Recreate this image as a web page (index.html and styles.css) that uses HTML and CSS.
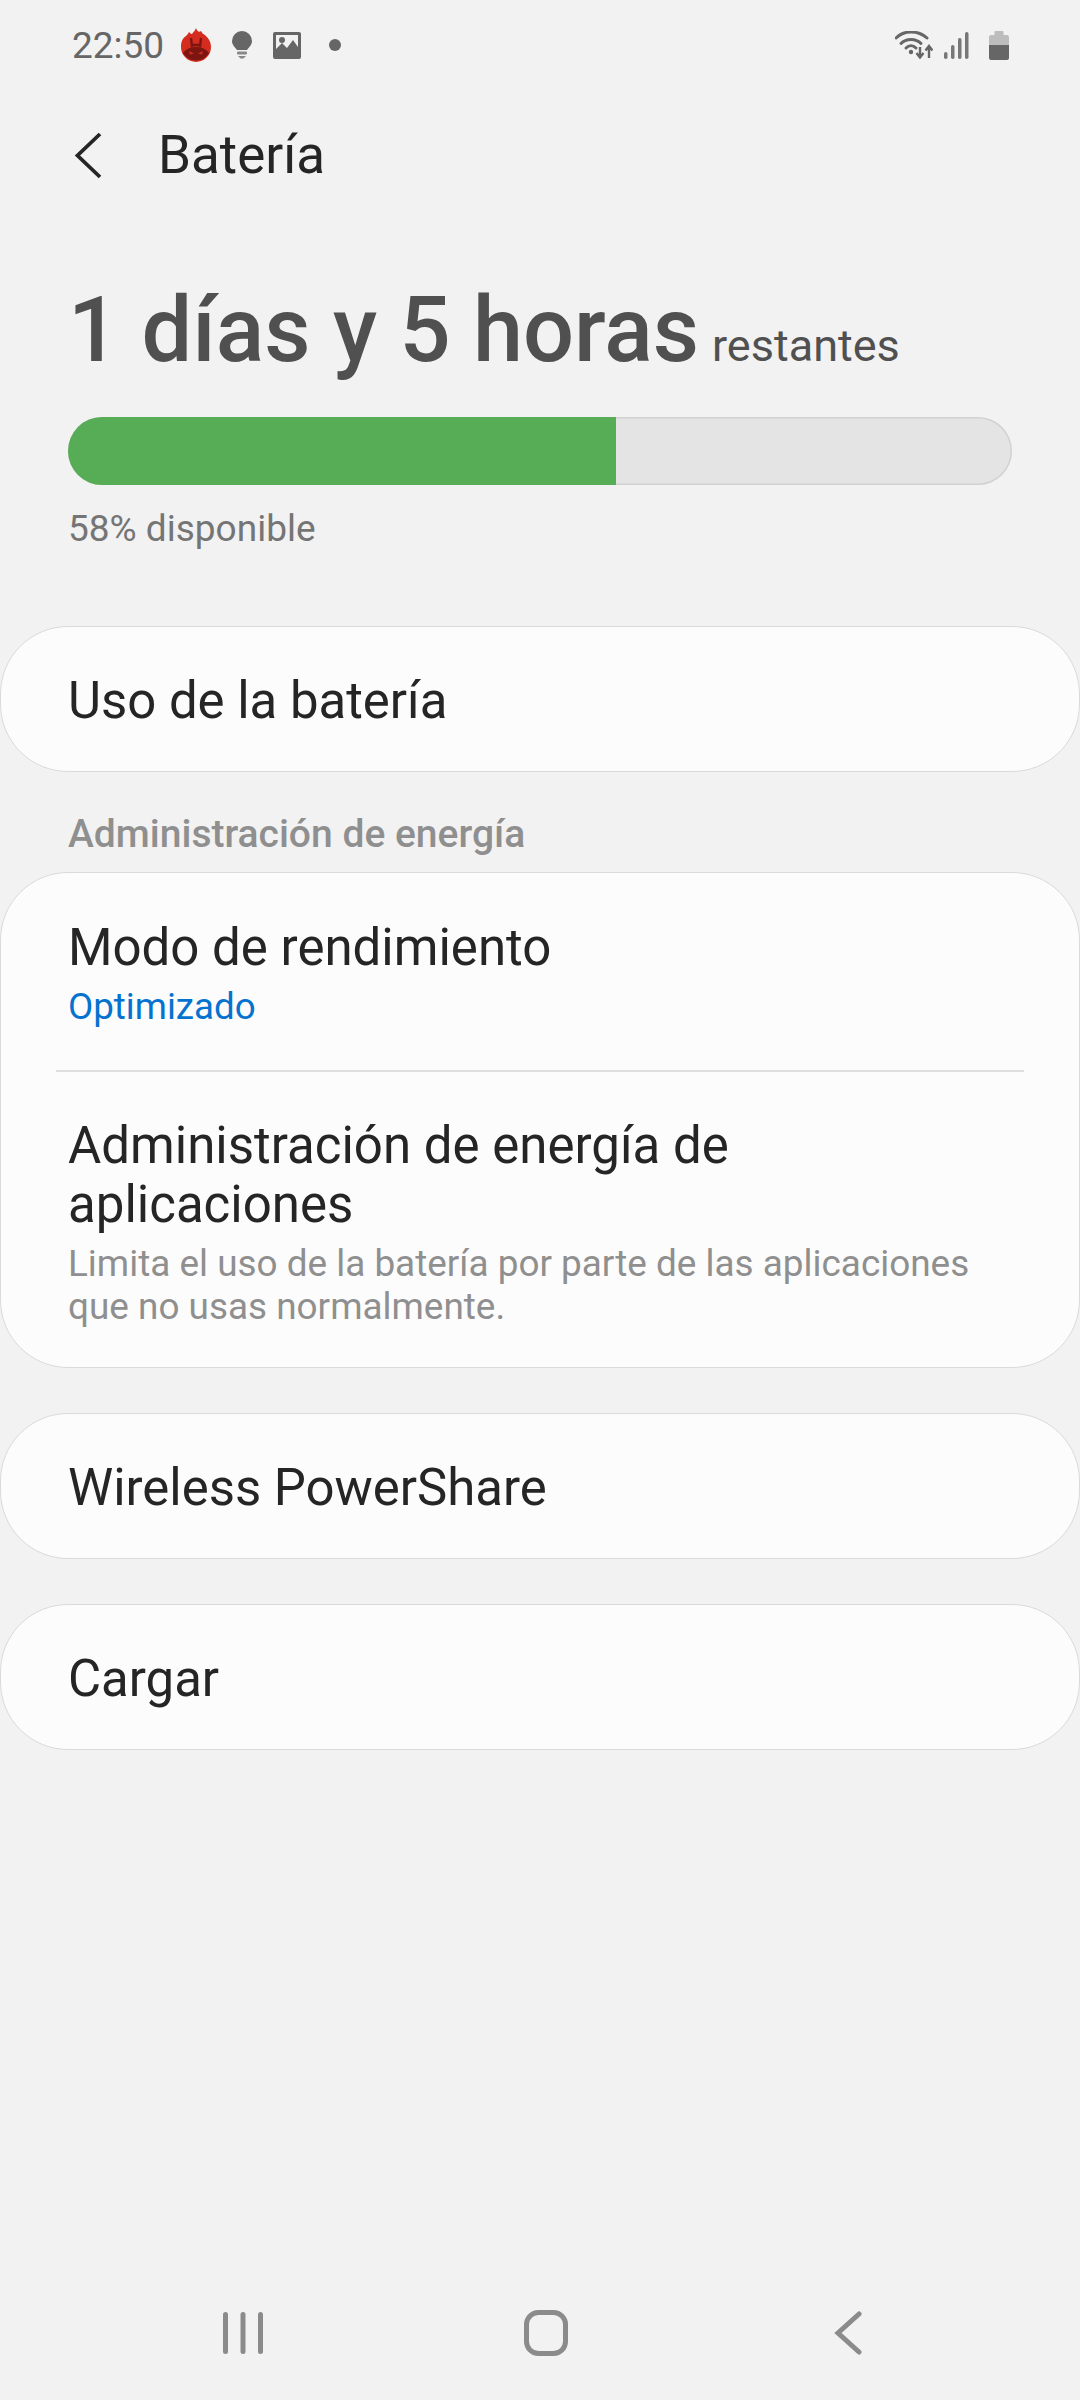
FILE: index.html
```html
<!DOCTYPE html>
<html lang="es">
<head>
    <meta charset="utf-8">
    <title>Batería</title>
    <link rel="stylesheet" href="styles.css">
</head>
<body>
    <div class="screen">
        <div class="statusbar">
            <div class="status-left">
                <span class="clock">22:50</span>
                <svg class="ic-antutu" width="30" height="34" viewBox="0 0 30 34">
                    <path d="M15 0 C16 3 18 5 20 3 C21 5 22 6 24 7 C27 10 30 13 30 19 A15 15 0 0 1 0 19 C0 13 2 10 5 8 C6 7 7 6 8 4 C9 5 10 6 11 6 C12 4 14 3 15 0Z" fill="#d42d20"/>
                    <path d="M2 25 C6 20 10 19 15 19 C20 19 24 20 28 25 A15 15 0 0 1 2 25Z" fill="#7d1610"/>
                    <path d="M10 10 L11 19 M20 10 L19 19 M11 17 L19 17" stroke="#7d1610" stroke-width="2.400" fill="none"/>
                    <path d="M8 23 L13 25.500 L9 26.500Z M22 23 L17 25.500 L21 26.500Z" fill="#d42d20"/>
                </svg>
                <svg class="ic-bulb" width="20" height="28" viewBox="0 0 20 28">
                    <path d="M10 0 A10 10 0 0 1 20 10 C20 14 17 16 15 19 L5 19 C3 16 0 14 0 10 A10 10 0 0 1 10 0Z" fill="#666"/>
                    <rect x="5" y="20.500" width="10" height="3" rx="1" fill="#888"/>
                    <path d="M6 25 L14 25 L11.500 27.500 L8.500 27.500Z" fill="#888"/>
                </svg>
                <svg class="ic-pic" width="28" height="27" viewBox="0 0 28 27">
                    <path fill-rule="evenodd" d="M2 0 H26 A2 2 0 0 1 28 2 V25 A2 2 0 0 1 26 27 H2 A2 2 0 0 1 0 25 V2 A2 2 0 0 1 2 0Z M3 3 V17 L9 11 L14 16 L20 8 L25 15 V3Z" fill="#666"/>
                    <circle cx="9" cy="8" r="3" fill="#666"/>
                </svg>
                <span class="dot"></span>
            </div>
            <div class="status-right">
                <svg class="ic-wifi" width="38" height="28" viewBox="0 0 38 28">
                    <path d="M1 7 C9 -1 23 -1 32 7" fill="none" stroke="#666" stroke-width="3" stroke-linecap="round"/>
                    <path d="M6 12.500 C11 7 21 7 26 12.500" fill="none" stroke="#666" stroke-width="3" stroke-linecap="round"/>
                    <path d="M11 17 C14 14 18 14 21 17" fill="none" stroke="#666" stroke-width="3" stroke-linecap="round"/>
                    <circle cx="16" cy="21" r="2.200" fill="#666"/>
                    <path d="M25 16 V25 M21.500 22 L25 26.500 L28.500 22" fill="none" stroke="#666" stroke-width="2.400"/>
                    <path d="M34 27 V16 M30.500 19.500 L34 15 L37.500 19.500" fill="none" stroke="#666" stroke-width="2.400"/>
                </svg>
                <svg class="ic-signal" width="25" height="27" viewBox="0 0 25 27">
                    <rect x="0" y="20" width="3.500" height="7" rx="1.700" fill="#777"/>
                    <rect x="7" y="13" width="3.500" height="14" rx="1.700" fill="#777"/>
                    <rect x="14" y="6" width="3.500" height="21" rx="1.700" fill="#777"/>
                    <rect x="21" y="0" width="3.500" height="27" rx="1.700" fill="#777"/>
                </svg>
                <svg class="ic-batt" width="20" height="29" viewBox="0 0 20 29">
                    <rect x="5.500" y="0" width="9" height="5" rx="1" fill="#bdbdbd"/>
                    <path d="M2 4 H18 A2 2 0 0 1 20 6 V14 H0 V6 A2 2 0 0 1 2 4Z" fill="#bdbdbd"/>
                    <path d="M0 14 H20 V27 A2 2 0 0 1 18 29 H2 A2 2 0 0 1 0 27Z" fill="#666"/>
                </svg>
            </div>
        </div>

        <div class="topbar">
            <svg class="ic-back" width="28" height="47" viewBox="0 0 28 47">
                <path d="M26 2 L3.500 23.500 L26 45" fill="none" stroke="#252525" stroke-width="3.800"/>
            </svg>
            <span class="topbar-title">Batería</span>
        </div>

        <div class="summary">
            <div class="remain"><span class="remain-big">1 días y 5 horas</span> <span class="remain-small">restantes</span></div>
            <div class="bar"><div class="bar-fill" style="width: 58%"></div></div>
            <div class="avail">58% disponible</div>
        </div>

        <div class="card row-single">Uso de la batería</div>

        <div class="section-label">Administración de energía</div>

        <div class="card card-group">
            <div class="item item-first">
                <div class="item-title">Modo de rendimiento</div>
                <div class="item-value">Optimizado</div>
            </div>
            <div class="divider"></div>
            <div class="item item-last">
                <div class="item-title">Administración de energía de aplicaciones</div>
                <div class="item-desc">Limita el uso de la batería por parte de las aplicaciones que no usas normalmente.</div>
            </div>
        </div>

        <div class="card row-single gap-top">Wireless PowerShare</div>
        <div class="card row-single gap-top">Cargar</div>

        <div class="navbar">
            <svg class="nav-recent" width="44" height="44" viewBox="0 0 44 44">
                <rect x="1" y="1" width="5" height="42" rx="2.500" fill="#8b8b8b"/>
                <rect x="18.500" y="1" width="5" height="42" rx="2.500" fill="#8b8b8b"/>
                <rect x="36" y="1" width="5" height="42" rx="2.500" fill="#8b8b8b"/>
            </svg>
            <svg class="nav-home" width="44" height="46" viewBox="0 0 44 46">
                <rect x="2.500" y="2.500" width="39" height="41" rx="12" fill="none" stroke="#8b8b8b" stroke-width="5"/>
            </svg>
            <svg class="nav-back" width="28" height="44" viewBox="0 0 28 44">
                <path d="M25 3 L4 22 L25 41" fill="none" stroke="#8b8b8b" stroke-width="5" stroke-linecap="round"/>
            </svg>
        </div>
    </div>
</body>
</html>
```

FILE: styles.css
```css
html, body {
    margin: 0;
    padding: 0;
}
body {
    background: #f2f2f2;
    font-family: Roboto, "Liberation Sans", sans-serif;
}
.screen {
    width: 1080px;
    height: 2400px;
    display: flex;
    flex-direction: column;
    box-sizing: border-box;
}

/* status bar */
.statusbar {
    height: 90px;
    display: flex;
    justify-content: space-between;
    align-items: center;
    padding: 0 71px 0 72px;
}
.status-left, .status-right {
    display: flex;
    align-items: center;
}
.clock {
    font-size: 37px;
    color: #666;
    margin-right: 17px;
}
.ic-antutu { margin-right: 21px; }
.ic-bulb { margin-right: 21px; }
.ic-pic { margin-right: 28px; }
.dot {
    width: 12px;
    height: 12px;
    border-radius: 50%;
    background: #666;
}
.ic-wifi { margin-right: 11px; }
.ic-signal { margin-right: 20px; }

/* title */
.topbar {
    height: 130px;
    display: flex;
    align-items: center;
    padding-left: 74px;
}
.topbar-title {
    font-size: 53px;
    color: #252525;
    margin-left: 56px;
}

.summary {
    padding: 0 68px;
}
.remain {
    margin-top: 65px;
    height: 92px;
    line-height: 92px;
    white-space: nowrap;
    color: #505050;
}
.remain-big {
    font-size: 90px;
    font-weight: 500;
}
.remain-small {
    font-size: 45px;
    margin-left: 9px;
}
.bar {
    margin-top: 40px;
    height: 68px;
    border-radius: 34px;
    background: #e4e4e4;
    box-shadow: inset 0 0 0 1.500px #d2d2d2;
    overflow: hidden;
}
.bar-fill {
    height: 68px;
    background: #57ad55;
}
.avail {
    margin-top: 22px;
    font-size: 37px;
    line-height: 44px;
    color: #757575;
}

/* cards */
.card {
    box-sizing: border-box;
    background: #fcfcfc;
    border: 1.500px solid #dadada;
    border-radius: 68px;
}
.row-single {
    margin-top: 75px;
    height: 146px;
    display: flex;
    align-items: center;
    padding: 3px 0 0 67px;
    font-size: 50.900px;
    color: #252525;
}
.gap-top {
    margin-top: 45px;
}
.section-label {
    margin-top: 40px;
    padding-left: 68px;
    height: 60px;
    line-height: 44px;
    font-size: 39px;
    font-weight: 500;
    color: #8f8f8f;
}
.card-group {
    padding: 0 55px;
}
.item {
    padding: 0 12px;
}
.item-first {
    padding-top: 45px;
    padding-bottom: 41px;
}
.item-last {
    padding-top: 44px;
    padding-bottom: 39px;
}
.item-title {
    font-size: 51px;
    line-height: 59px;
    color: #252525;
}
.item-value {
    margin-top: 8px;
    font-size: 36.700px;
    line-height: 44px;
    color: #0672cf;
}
.item-desc {
    margin-top: 8px;
    font-size: 36.900px;
    line-height: 43px;
    color: #8f8f8f;
}
.divider {
    height: 2px;
    background: #dedede;
}

/* bottom nav */
.navbar {
    margin-top: auto;
    height: 130px;
    display: flex;
    align-items: center;
    padding: 0 0 4px 222px;
    box-sizing: border-box;
}
.nav-home { margin-left: 258px; }
.nav-back { margin-left: 266px; }
```
